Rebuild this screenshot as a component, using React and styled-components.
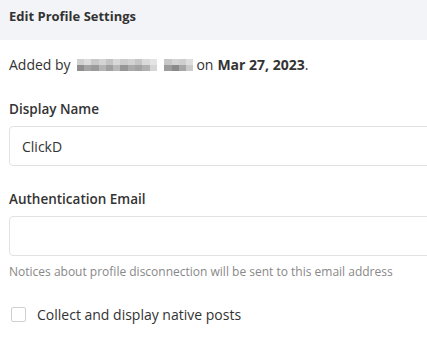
import React from "react"
import styled, { createGlobalStyle } from "styled-components"

const GlobalStyle = createGlobalStyle`
  body {
    margin: 0;
    background: #fff;
    font-family: "Open Sans", "Liberation Sans", sans-serif;
    color: #333;
  }
`

// pixelated name, two rows of grey cells
const topRow = ["#d0d0d0", "#dcdcdc", "#c8c8c8", "#d4d4d4", "#c4c4c4", "#d8d8d8", "#cccccc", "#d2d2d2", "#c6c6c6", "#dadada", "#e4e4e4", "#fff", "#c8c8c8", "#d4d4d4", "#cfcfcf", "#dedede"]
const bottomRow = ["#8e8e8e", "#a4a4a4", "#9a9a9a", "#b4b4b4", "#a0a0a0", "#b8b8b8", "#969696", "#aaaaaa", "#a2a2a2", "#b0b0b0", "#d6d6d6", "#fff", "#9c9c9c", "#8a8a8a", "#a6a6a6", "#cacaca"]

const EditProfile = () => (
  <Panel>
    <GlobalStyle />
    <Header>Edit Profile Settings</Header>
    <Body>
      <AddedLine>
        Added by
        <Blur>
          <BlurRow>
            {topRow.map((c, i) => (
              <Cell key={i} style={{ background: c }} />
            ))}
          </BlurRow>
          <BlurRow>
            {bottomRow.map((c, i) => (
              <Cell key={i} style={{ background: c }} />
            ))}
          </BlurRow>
        </Blur>
        on <strong>Mar 27, 2023</strong>.
      </AddedLine>

      <Field>
        <Label htmlFor="display-name">Display Name</Label>
        <Input id="display-name" type="text" defaultValue="ClickD" />
      </Field>

      <Field>
        <Label htmlFor="auth-email">Authentication Email</Label>
        <Input id="auth-email" type="email" />
        <Help>Notices about profile disconnection will be sent to this email address</Help>
      </Field>

      <CheckRow>
        <Box type="checkbox" />
        Collect and display native posts
      </CheckRow>
    </Body>
  </Panel>
)

export default EditProfile

const Panel = styled.div`
  width: 100%;
  overflow: hidden;
`

const Header = styled.div`
  height: 40px;
  background: #f3f4f7;
  display: flex;
  align-items: center;
  padding: 0 9px 9px;
  box-sizing: border-box;
  font-size: 13px;
  font-weight: 700;
  color: #333;
`

const Body = styled.div`
  padding: 0 9px;
`

const AddedLine = styled.div`
  display: flex;
  align-items: center;
  margin-top: 16px;
  font-size: 14px;
  line-height: 17px;
  color: #333;

  strong {
    font-weight: 700;
    margin-left: 4px;
  }
`

const Blur = styled.div`
  display: flex;
  flex-direction: column;
  margin: 0 3px 0 6px;
`

const BlurRow = styled.div`
  display: flex;
`

const Cell = styled.span`
  width: 7.3px;
  height: 6px;
`

const Field = styled.div`
  margin-top: 28px;
  display: flex;
  flex-direction: column;

  & + & {
    margin-top: 25px;
  }
`

const Label = styled.label`
  font-size: 13.5px;
  font-weight: 600;
  line-height: 17px;
  color: #333;
  margin-bottom: 8px;
`

const Input = styled.input`
  width: calc(100% + 20px);
  height: 40px;
  box-sizing: border-box;
  border: 1px solid #e2e2e2;
  border-radius: 4px;
  padding: 0 12px;
  font-family: inherit;
  font-size: 14px;
  color: #333;
  outline: none;
`

const Help = styled.div`
  margin-top: 7px;
  font-size: 12px;
  color: #888;
`

const CheckRow = styled.label`
  display: flex;
  align-items: center;
  gap: 11px;
  margin-top: 25px;
  padding-left: 2px;
  font-size: 14px;
  color: #333;
`

const Box = styled.input`
  appearance: none;
  margin: 0;
  width: 15px;
  height: 15px;
  border: 1px solid #d0d0d0;
  border-radius: 2px;
  background: #fff;
`
